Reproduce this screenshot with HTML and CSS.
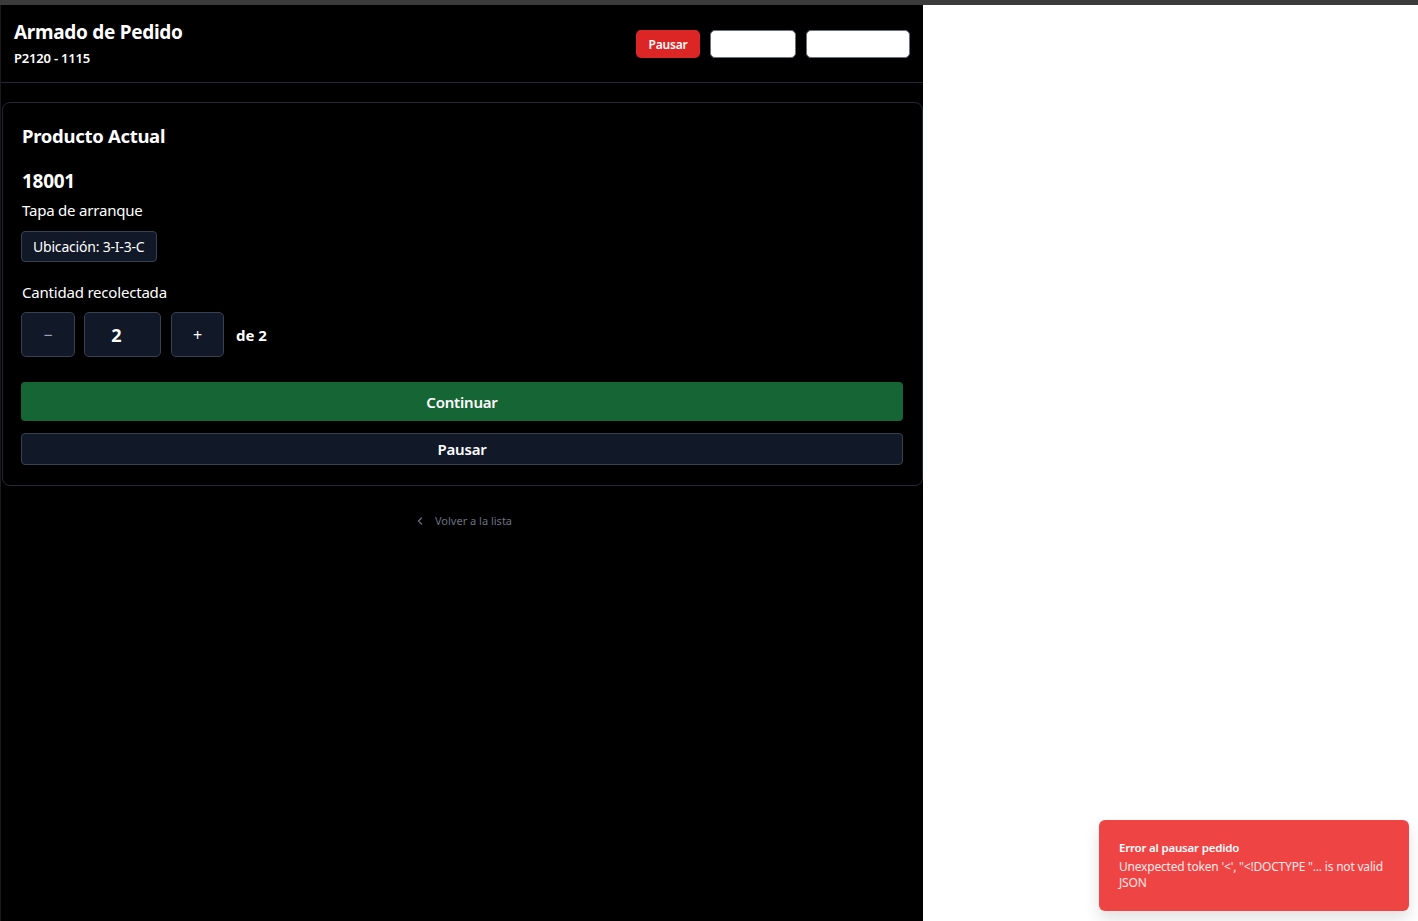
FILE: index.html
```html
<!DOCTYPE html>
<html lang="es">
<head>
<meta charset="utf-8">
<title>Armado de Pedido</title>
<link rel="stylesheet" href="styles.css">
</head>
<body>
<div class="topbar"></div>
<div class="screen">
  <main class="panel">
    <header class="header">
      <div class="titles">
        <h1 class="title">Armado de Pedido</h1>
        <div class="subtitle">P2120 - 1115</div>
      </div>
      <div class="actions">
        <button class="btn-red">Pausar</button>
        <button class="btn-white w1"></button>
        <button class="btn-white w2"></button>
      </div>
    </header>
    <section class="card">
      <h2 class="card-title">Producto Actual</h2>
      <div class="code">18001</div>
      <div class="desc">Tapa de arranque</div>
      <div class="badge">Ubicación: 3-I-3-C</div>
      <div class="qty-label">Cantidad recolectada</div>
      <div class="qty-row">
        <button class="step minus">−</button>
        <div class="qty-input">2</div>
        <button class="step plus">+</button>
        <span class="qty-total">de 2</span>
      </div>
      <button class="btn-continue">Continuar</button>
      <button class="btn-pause">Pausar</button>
    </section>
    <div class="back">
      <svg width="12" height="12" viewBox="0 0 12 12"><path d="M7.5 3 L4.5 6 L7.5 9" fill="none" stroke="#6b7280" stroke-width="1.2" stroke-linecap="round" stroke-linejoin="round"/></svg>
      <span>Volver a la lista</span>
    </div>
  </main>
  <div class="blank"></div>
</div>
<div class="toast">
  <div class="toast-title">Error al pausar pedido</div>
  <div class="toast-text">Unexpected token '&lt;', "&lt;!DOCTYPE "... is not valid JSON</div>
</div>
</body>
</html>
```
FILE: styles.css
```css
* { box-sizing: border-box; }
html, body { margin: 0; padding: 0; height: 100%; }
body {
  font-family: "Noto Sans", "Open Sans", sans-serif;
  background: #ffffff;
  color: #ffffff;
  overflow: hidden;
}
.topbar { height: 5px; background: #3b3b3b; }
.screen { display: flex; height: 916px; }
.panel {
  width: 923px;
  background: #000000;
  border-left: 1px solid #1a1a1a;
  display: flex;
  flex-direction: column;
}
.blank { flex: 1; background: #fff; }
.header {
  height: 78px;
  border-bottom: 1px solid #1f2937;
  display: flex;
  justify-content: space-between;
  align-items: flex-start;
  padding: 15px 13px 0 13px;
}
.title { margin: 0; font-size: 19px; font-weight: 700; line-height: 24px; letter-spacing: -0.3px; }
.subtitle { margin-top: 5px; font-size: 13px; font-weight: 600; line-height: 18px; letter-spacing: -0.2px; }
.actions { display: flex; gap: 10px; margin-top: 10px; }
button { font-family: inherit; cursor: pointer; }
.btn-red {
  height: 28px; width: 64px; border: none; border-radius: 5px;
  background: #dc2626; color: #fff; font-size: 12px; font-weight: 600; letter-spacing: -0.2px;
}
.btn-white {
  height: 28px; border: 1px solid #6b7280; border-radius: 5px; background: #fff;
}
.w1 { width: 86px; }
.w2 { width: 104px; }
.card {
  margin: 19px 0 0 1px;
  width: 921px;
  border: 1px solid #1f2937;
  border-radius: 8px;
  padding: 20px 19px 20px 18px;
  display: flex;
  flex-direction: column;
  align-items: flex-start;
}
.card-title { margin: 0 0 0 1px; font-size: 18.5px; font-weight: 700; line-height: 26px; letter-spacing: -0.3px; }
.code { margin: 19px 0 0 1px; font-size: 19px; font-weight: 700; line-height: 26px; letter-spacing: -0.3px; }
.desc { margin: 5px 0 0 1px; font-size: 15px; line-height: 22px; letter-spacing: -0.2px; }
.badge {
  margin-top: 10px; height: 31px; padding: 0 12px 0 11px;
  display: flex; align-items: center;
  background: #111827; border: 1px solid #374151; border-radius: 4px;
  font-size: 14px; letter-spacing: -0.2px;
}
.qty-label { margin: 19px 0 0 1px; font-size: 15px; line-height: 22px; letter-spacing: -0.2px; }
.qty-row { margin-top: 9px; display: flex; align-items: center; }
.step, .qty-input {
  height: 45px; background: #111827; border: 1px solid #374151; border-radius: 5px; color: #fff;
  display: flex; align-items: center; justify-content: center;
}
.minus { width: 54px; font-size: 16px; color: #9ca3af; }
.qty-input { width: 77px; margin-left: 9px; font-size: 18px; font-weight: 700; padding-right: 12px; }
.plus { width: 53px; margin-left: 10px; font-size: 16px; }
.qty-total { margin-left: 12px; font-size: 15px; font-weight: 700; }
.btn-continue {
  margin-top: 25px; width: 100%; height: 39px; border: none; border-radius: 4px;
  background: #166534; color: #fff; font-size: 15px; font-weight: 600; letter-spacing: -0.2px;
}
.btn-pause {
  margin-top: 12px; width: 100%; height: 32px; border: 1px solid #374151; border-radius: 4px;
  background: #111827; color: #fff; font-size: 15px; font-weight: 600; letter-spacing: -0.2px;
}
.back {
  margin-top: 27px; display: flex; justify-content: center; align-items: center; gap: 9px;
  font-size: 11px; color: #6b7280; padding-left: 2px;
}
.toast {
  position: absolute; left: 1099px; top: 820px; width: 310px; height: 91px;
  background: #ef4444; border-radius: 6px;
  box-shadow: 0 8px 16px rgba(0,0,0,0.12);
  padding: 20px 20px 0 20px;
  font-size: 12px; line-height: 16px; letter-spacing: -0.2px;
}
.toast-title { font-weight: 600; margin-bottom: 3px; font-size: 11.5px; }
.toast-text { color: #fde8e8; }
```
